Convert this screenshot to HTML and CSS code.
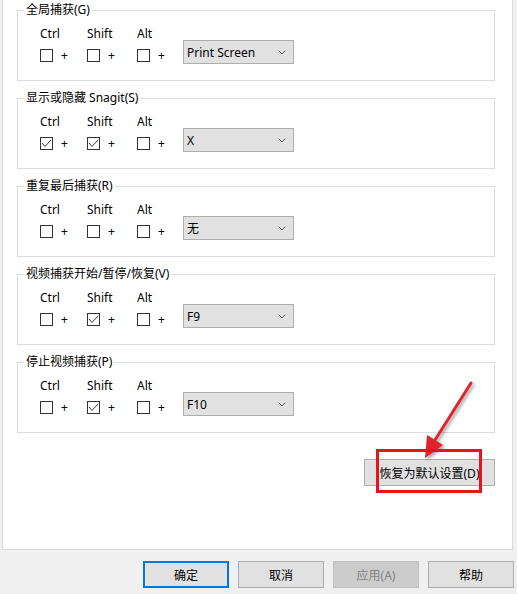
FILE: index.html
```html
<!DOCTYPE html>
<html lang="zh-CN">
<head>
  <meta charset="UTF-8" />
  <title>热键设置</title>
  <link rel="stylesheet" href="styles.css">
</head>
<body>
  <div class="panel">

    <fieldset class="hotkey">
      <legend>全局捕获(G)</legend>
      <div class="keys">
        <span class="mod">Ctrl</span><span class="mod">Shift</span><span class="mod">Alt</span>
        <span class="combo"><i class="cb"></i>+</span>
        <span class="combo"><i class="cb"></i>+</span>
        <span class="combo"><i class="cb"></i>+</span>
        <div class="select">Print Screen<svg class="chev" width="8" height="5" viewBox="0 0 8 5"><polyline points="0.5,0.5 4,4 7.5,0.5"/></svg></div>
      </div>
    </fieldset>

    <fieldset class="hotkey">
      <legend>显示或隐藏 Snagit(S)</legend>
      <div class="keys">
        <span class="mod">Ctrl</span><span class="mod">Shift</span><span class="mod">Alt</span>
        <span class="combo"><i class="cb"><svg width="11" height="11" viewBox="0 0 11 11"><polyline points="1,5 4,8.5 10,2"/></svg></i>+</span>
        <span class="combo"><i class="cb"><svg width="11" height="11" viewBox="0 0 11 11"><polyline points="1,5 4,8.5 10,2"/></svg></i>+</span>
        <span class="combo"><i class="cb"></i>+</span>
        <div class="select">X<svg class="chev" width="8" height="5" viewBox="0 0 8 5"><polyline points="0.5,0.5 4,4 7.5,0.5"/></svg></div>
      </div>
    </fieldset>

    <fieldset class="hotkey">
      <legend>重复最后捕获(R)</legend>
      <div class="keys">
        <span class="mod">Ctrl</span><span class="mod">Shift</span><span class="mod">Alt</span>
        <span class="combo"><i class="cb"></i>+</span>
        <span class="combo"><i class="cb"></i>+</span>
        <span class="combo"><i class="cb"></i>+</span>
        <div class="select">无<svg class="chev" width="8" height="5" viewBox="0 0 8 5"><polyline points="0.5,0.5 4,4 7.5,0.5"/></svg></div>
      </div>
    </fieldset>

    <fieldset class="hotkey">
      <legend>视频捕获开始/暂停/恢复(V)</legend>
      <div class="keys">
        <span class="mod">Ctrl</span><span class="mod">Shift</span><span class="mod">Alt</span>
        <span class="combo"><i class="cb"></i>+</span>
        <span class="combo"><i class="cb"><svg width="11" height="11" viewBox="0 0 11 11"><polyline points="1,5 4,8.5 10,2"/></svg></i>+</span>
        <span class="combo"><i class="cb"></i>+</span>
        <div class="select">F9<svg class="chev" width="8" height="5" viewBox="0 0 8 5"><polyline points="0.5,0.5 4,4 7.5,0.5"/></svg></div>
      </div>
    </fieldset>

    <fieldset class="hotkey">
      <legend>停止视频捕获(P)</legend>
      <div class="keys">
        <span class="mod">Ctrl</span><span class="mod">Shift</span><span class="mod">Alt</span>
        <span class="combo"><i class="cb"></i>+</span>
        <span class="combo"><i class="cb"><svg width="11" height="11" viewBox="0 0 11 11"><polyline points="1,5 4,8.5 10,2"/></svg></i>+</span>
        <span class="combo"><i class="cb"></i>+</span>
        <div class="select">F10<svg class="chev" width="8" height="5" viewBox="0 0 8 5"><polyline points="0.5,0.5 4,4 7.5,0.5"/></svg></div>
      </div>
    </fieldset>

    <div class="reset-row">
      <button class="btn btn-reset">恢复为默认设置(D)</button>
    </div>
  </div>

  <div class="button-bar">
    <button class="btn btn-ok">确定</button>
    <button class="btn">取消</button>
    <button class="btn" disabled>应用(A)</button>
    <button class="btn">帮助</button>
  </div>

  <!-- annotation: arrow pointing at the reset button -->
  <svg class="mark" width="517" height="594" viewBox="0 0 517 594">
    <g class="arrow">
      <line x1="471" y1="383" x2="435" y2="440" />
      <polygon points="425,458 443,445 427,435" />
    </g>
    <rect x="377.5" y="450.5" width="103" height="41" />
  </svg>
</body>
</html>
```

FILE: styles.css
```css
* {
  box-sizing: border-box;
}

html, body {
  margin: 0;
  height: 100%;
}

body {
  position: relative;
  width: 517px;
  height: 594px;
  overflow: hidden;
  background: #f0f0f0;
  color: #000;
  font-family: "Noto Sans", "Noto Sans CJK SC", sans-serif;
  font-size: 12px;
}

.panel {
  margin: 0 4px 0 2px;
  height: 550px;
  padding: 2px 17px 0 14px;
  background: #fff;
  border: 1px solid #d9d9d9;
  border-top: none;
}

fieldset.hotkey {
  margin: 0 0 9px 0;
  padding: 8px 0 16px 6px;
  border: 1px solid #dcdcdc;
  min-width: 0;
}

fieldset.hotkey legend {
  padding: 0 2px;
  line-height: 16px;
}

.keys {
  display: grid;
  grid-template-columns: 47px 50px 46px 111px;
  grid-template-rows: 14px 24px;
  margin-left: 16px;
}

.mod {
  line-height: 15px;
  grid-row: 1;
}

.combo {
  grid-row: 2;
  align-self: end;
  display: flex;
  align-items: center;
  margin-bottom: 2px;
  height: 13px;
  line-height: 13px;
}

.cb {
  display: inline-block;
  width: 13px;
  height: 13px;
  border: 1px solid #333;
  background: #fff;
  margin-right: 8px;
}

.cb svg {
  display: block;
  fill: none;
  stroke: #333;
  stroke-width: 1;
}

.select {
  grid-row: 2;
  grid-column: 4;
  display: flex;
  align-items: center;
  justify-content: space-between;
  height: 24px;
  padding: 0 7px 0 3px;
  background: #e1e1e1;
  border: 1px solid #adadad;
}

.chev {
  fill: none;
  stroke: #606060;
  stroke-width: 1;
}

.reset-row {
  display: flex;
  justify-content: flex-end;
  margin-top: 26px;
}

.btn {
  height: 27px;
  font-family: inherit;
  font-size: 12px;
  color: #000;
  background: #e1e1e1;
  border: 1px solid #adadad;
  padding: 0;
}

.btn-reset {
  width: 131px;
}

.btn:disabled {
  background: #cccccc;
  border-color: #bfbfbf;
  color: #838383;
}

.btn-ok {
  border: 2px solid #0078d7;
}

.button-bar {
  display: flex;
  justify-content: flex-end;
  gap: 9px;
  padding: 11px 3px 0 0;
}

.button-bar .btn {
  width: 86px;
}

.mark {
  position: absolute;
  top: 0;
  left: 0;
  pointer-events: none;
}

.arrow {
  filter: drop-shadow(2px 2px 1.5px rgba(0, 0, 0, 0.35));
}

.arrow line {
  stroke: #e3232a;
  stroke-width: 3;
  stroke-linecap: round;
}

.arrow polygon {
  fill: #e3232a;
}

.mark rect {
  fill: none;
  stroke: #e8141c;
  stroke-width: 3;
}
```
